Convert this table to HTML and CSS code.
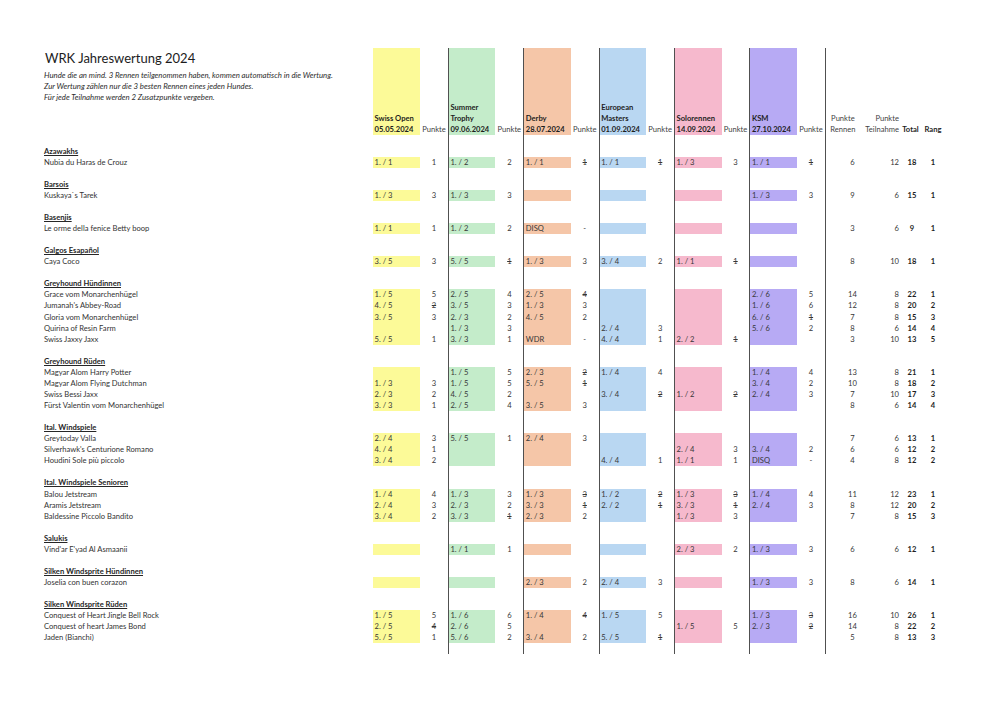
FILE: index.html
```html
<!DOCTYPE html>
<html lang="de">
<head>
<meta charset="utf-8">
<title>WRK Jahreswertung 2024</title>
<link rel="stylesheet" href="styles.css">
</head>
<body>
<div class="sheet">
<table class="wr">
<colgroup>
<col class="name">
<col class="res"><col class="pkt">
<col class="res sep"><col class="pkt">
<col class="res sep"><col class="pkt">
<col class="res sep"><col class="pkt">
<col class="res sep"><col class="pkt">
<col class="res sep"><col class="pkt">
<col class="pr sep"><col class="pt"><col class="tot"><col class="rang">
</colgroup>
<thead>
<tr class="head">
<td class="intro">
<h1 class="title">WRK Jahreswertung 2024</h1>
<p class="note">Hunde die an mind. 3 Rennen teilgenommen haben, kommen automatisch in die Wertung.<br>Zur Wertung zählen nur die 3 besten Rennen eines jeden Hundes.<br>Für jede Teilnahme werden 2 Zusatzpunkte vergeben.</p>
</td>
<td class="race y">Swiss Open<br>05.05.2024</td><td class="ph">Punkte</td>
<td class="race gr">Summer<br>Trophy<br>09.06.2024</td><td class="ph">Punkte</td>
<td class="race o">Derby<br>28.07.2024</td><td class="ph">Punkte</td>
<td class="race b">European<br>Masters<br>01.09.2024</td><td class="ph">Punkte</td>
<td class="race k">Solorennen<br>14.09.2024</td><td class="ph">Punkte</td>
<td class="race v">KSM<br>27.10.2024</td><td class="ph">Punkte</td>
<td class="hpr">Punkte<br>Rennen</td>
<td class="hpt">Punkte<br>Teilnahme</td>
<td class="htot">Total</td>
<td class="hrg">Rang</td>
</tr>
</thead>
<tbody>
<tr class="blank"><td></td><td colspan="2"></td><td colspan="2"></td><td colspan="2"></td><td colspan="2"></td><td colspan="2"></td><td colspan="2"></td><td colspan="4"></td></tr>

<tr><td class="grp"><span>Azawakhs</span></td><td colspan="2"></td><td colspan="2"></td><td colspan="2"></td><td colspan="2"></td><td colspan="2"></td><td colspan="2"></td><td colspan="4"></td></tr>
<tr><td class="nm">Nubia du Haras de Crouz</td>
<td class="c y">1. / 1</td><td class="p">1</td>
<td class="c gr">1. / 2</td><td class="p">2</td>
<td class="c o">1. / 1</td><td class="p"><s>1</s></td>
<td class="c b">1. / 1</td><td class="p"><s>1</s></td>
<td class="c k">1. / 3</td><td class="p">3</td>
<td class="c v">1. / 1</td><td class="p"><s>1</s></td>
<td class="pr">6</td><td class="pt">12</td><td class="tot">18</td><td class="rg">1</td></tr>
<tr class="blank"><td></td><td colspan="2"></td><td colspan="2"></td><td colspan="2"></td><td colspan="2"></td><td colspan="2"></td><td colspan="2"></td><td colspan="4"></td></tr>

<tr><td class="grp"><span>Barsois</span></td><td colspan="2"></td><td colspan="2"></td><td colspan="2"></td><td colspan="2"></td><td colspan="2"></td><td colspan="2"></td><td colspan="4"></td></tr>
<tr><td class="nm">Kuskaya`s Tarek</td>
<td class="c y">1. / 3</td><td class="p">3</td>
<td class="c gr">1. / 3</td><td class="p">3</td>
<td class="c o"></td><td class="p"></td>
<td class="c b"></td><td class="p"></td>
<td class="c k"></td><td class="p"></td>
<td class="c v">1. / 3</td><td class="p">3</td>
<td class="pr">9</td><td class="pt">6</td><td class="tot">15</td><td class="rg">1</td></tr>
<tr class="blank"><td></td><td colspan="2"></td><td colspan="2"></td><td colspan="2"></td><td colspan="2"></td><td colspan="2"></td><td colspan="2"></td><td colspan="4"></td></tr>

<tr><td class="grp"><span>Basenjis</span></td><td colspan="2"></td><td colspan="2"></td><td colspan="2"></td><td colspan="2"></td><td colspan="2"></td><td colspan="2"></td><td colspan="4"></td></tr>
<tr><td class="nm">Le orme della fenice Betty boop</td>
<td class="c y">1. / 1</td><td class="p">1</td>
<td class="c gr">1. / 2</td><td class="p">2</td>
<td class="c o">DISQ</td><td class="p">-</td>
<td class="c b"></td><td class="p"></td>
<td class="c k"></td><td class="p"></td>
<td class="c v"></td><td class="p"></td>
<td class="pr">3</td><td class="pt">6</td><td class="tot">9</td><td class="rg">1</td></tr>
<tr class="blank"><td></td><td colspan="2"></td><td colspan="2"></td><td colspan="2"></td><td colspan="2"></td><td colspan="2"></td><td colspan="2"></td><td colspan="4"></td></tr>

<tr><td class="grp"><span>Galgos Esapañol</span></td><td colspan="2"></td><td colspan="2"></td><td colspan="2"></td><td colspan="2"></td><td colspan="2"></td><td colspan="2"></td><td colspan="4"></td></tr>
<tr><td class="nm">Caya Coco</td>
<td class="c y">3. / 5</td><td class="p">3</td>
<td class="c gr">5. / 5</td><td class="p"><s>1</s></td>
<td class="c o">1. / 3</td><td class="p">3</td>
<td class="c b">3. / 4</td><td class="p">2</td>
<td class="c k">1. / 1</td><td class="p"><s>1</s></td>
<td class="c v"></td><td class="p"></td>
<td class="pr">8</td><td class="pt">10</td><td class="tot">18</td><td class="rg">1</td></tr>
<tr class="blank"><td></td><td colspan="2"></td><td colspan="2"></td><td colspan="2"></td><td colspan="2"></td><td colspan="2"></td><td colspan="2"></td><td colspan="4"></td></tr>

<tr><td class="grp"><span>Greyhound Hündinnen</span></td><td colspan="2"></td><td colspan="2"></td><td colspan="2"></td><td colspan="2"></td><td colspan="2"></td><td colspan="2"></td><td colspan="4"></td></tr>
<tr><td class="nm">Grace vom Monarchenhügel</td>
<td class="c y">1. / 5</td><td class="p">5</td>
<td class="c gr">2. / 5</td><td class="p">4</td>
<td class="c o">2. / 5</td><td class="p"><s>4</s></td>
<td class="c b"></td><td class="p"></td>
<td class="c k"></td><td class="p"></td>
<td class="c v">2. / 6</td><td class="p">5</td>
<td class="pr">14</td><td class="pt">8</td><td class="tot">22</td><td class="rg">1</td></tr>
<tr><td class="nm">Jumanah's Abbey-Road</td>
<td class="c y">4. / 5</td><td class="p"><s>2</s></td>
<td class="c gr">3. / 5</td><td class="p">3</td>
<td class="c o">1. / 3</td><td class="p">3</td>
<td class="c b"></td><td class="p"></td>
<td class="c k"></td><td class="p"></td>
<td class="c v">1. / 6</td><td class="p">6</td>
<td class="pr">12</td><td class="pt">8</td><td class="tot">20</td><td class="rg">2</td></tr>
<tr><td class="nm">Gloria vom Monarchenhügel</td>
<td class="c y">3. / 5</td><td class="p">3</td>
<td class="c gr">2. / 3</td><td class="p">2</td>
<td class="c o">4. / 5</td><td class="p">2</td>
<td class="c b"></td><td class="p"></td>
<td class="c k"></td><td class="p"></td>
<td class="c v">6. / 6</td><td class="p"><s>1</s></td>
<td class="pr">7</td><td class="pt">8</td><td class="tot">15</td><td class="rg">3</td></tr>
<tr><td class="nm">Quirina of Resin Farm</td>
<td class="c y"></td><td class="p"></td>
<td class="c gr">1. / 3</td><td class="p">3</td>
<td class="c o"></td><td class="p"></td>
<td class="c b">2. / 4</td><td class="p">3</td>
<td class="c k"></td><td class="p"></td>
<td class="c v">5. / 6</td><td class="p">2</td>
<td class="pr">8</td><td class="pt">6</td><td class="tot">14</td><td class="rg">4</td></tr>
<tr><td class="nm">Swiss Jaxxy Jaxx</td>
<td class="c y">5. / 5</td><td class="p">1</td>
<td class="c gr">3. / 3</td><td class="p">1</td>
<td class="c o">WDR</td><td class="p">-</td>
<td class="c b">4. / 4</td><td class="p">1</td>
<td class="c k">2. / 2</td><td class="p"><s>1</s></td>
<td class="c v"></td><td class="p"></td>
<td class="pr">3</td><td class="pt">10</td><td class="tot">13</td><td class="rg">5</td></tr>
<tr class="blank"><td></td><td colspan="2"></td><td colspan="2"></td><td colspan="2"></td><td colspan="2"></td><td colspan="2"></td><td colspan="2"></td><td colspan="4"></td></tr>

<tr><td class="grp"><span>Greyhound Rüden</span></td><td colspan="2"></td><td colspan="2"></td><td colspan="2"></td><td colspan="2"></td><td colspan="2"></td><td colspan="2"></td><td colspan="4"></td></tr>
<tr><td class="nm">Magyar Alom Harry Potter</td>
<td class="c y"></td><td class="p"></td>
<td class="c gr">1. / 5</td><td class="p">5</td>
<td class="c o">2. / 3</td><td class="p"><s>2</s></td>
<td class="c b">1. / 4</td><td class="p">4</td>
<td class="c k"></td><td class="p"></td>
<td class="c v">1. / 4</td><td class="p">4</td>
<td class="pr">13</td><td class="pt">8</td><td class="tot">21</td><td class="rg">1</td></tr>
<tr><td class="nm">Magyar Alom Flying Dutchman</td>
<td class="c y">1. / 3</td><td class="p">3</td>
<td class="c gr">1. / 5</td><td class="p">5</td>
<td class="c o">5. / 5</td><td class="p"><s>1</s></td>
<td class="c b"></td><td class="p"></td>
<td class="c k"></td><td class="p"></td>
<td class="c v">3. / 4</td><td class="p">2</td>
<td class="pr">10</td><td class="pt">8</td><td class="tot">18</td><td class="rg">2</td></tr>
<tr><td class="nm">Swiss Bessi Jaxx</td>
<td class="c y">2. / 3</td><td class="p">2</td>
<td class="c gr">4. / 5</td><td class="p">2</td>
<td class="c o"></td><td class="p"></td>
<td class="c b">3. / 4</td><td class="p"><s>2</s></td>
<td class="c k">1. / 2</td><td class="p"><s>2</s></td>
<td class="c v">2. / 4</td><td class="p">3</td>
<td class="pr">7</td><td class="pt">10</td><td class="tot">17</td><td class="rg">3</td></tr>
<tr><td class="nm">Fürst Valentin vom Monarchenhügel</td>
<td class="c y">3. / 3</td><td class="p">1</td>
<td class="c gr">2. / 5</td><td class="p">4</td>
<td class="c o">3. / 5</td><td class="p">3</td>
<td class="c b"></td><td class="p"></td>
<td class="c k"></td><td class="p"></td>
<td class="c v"></td><td class="p"></td>
<td class="pr">8</td><td class="pt">6</td><td class="tot">14</td><td class="rg">4</td></tr>
<tr class="blank"><td></td><td colspan="2"></td><td colspan="2"></td><td colspan="2"></td><td colspan="2"></td><td colspan="2"></td><td colspan="2"></td><td colspan="4"></td></tr>

<tr><td class="grp"><span>Ital. Windspiele</span></td><td colspan="2"></td><td colspan="2"></td><td colspan="2"></td><td colspan="2"></td><td colspan="2"></td><td colspan="2"></td><td colspan="4"></td></tr>
<tr><td class="nm">Greytoday Valla</td>
<td class="c y">2. / 4</td><td class="p">3</td>
<td class="c gr">5. / 5</td><td class="p">1</td>
<td class="c o">2. / 4</td><td class="p">3</td>
<td class="c b"></td><td class="p"></td>
<td class="c k"></td><td class="p"></td>
<td class="c v"></td><td class="p"></td>
<td class="pr">7</td><td class="pt">6</td><td class="tot">13</td><td class="rg">1</td></tr>
<tr><td class="nm">Silverhawk's Centurione Romano</td>
<td class="c y">4. / 4</td><td class="p">1</td>
<td class="c gr"></td><td class="p"></td>
<td class="c o"></td><td class="p"></td>
<td class="c b"></td><td class="p"></td>
<td class="c k">2. / 4</td><td class="p">3</td>
<td class="c v">3. / 4</td><td class="p">2</td>
<td class="pr">6</td><td class="pt">6</td><td class="tot">12</td><td class="rg">2</td></tr>
<tr><td class="nm">Houdini Sole più piccolo</td>
<td class="c y">3. / 4</td><td class="p">2</td>
<td class="c gr"></td><td class="p"></td>
<td class="c o"></td><td class="p"></td>
<td class="c b">4. / 4</td><td class="p">1</td>
<td class="c k">1. / 1</td><td class="p">1</td>
<td class="c v">DISQ</td><td class="p">-</td>
<td class="pr">4</td><td class="pt">8</td><td class="tot">12</td><td class="rg">2</td></tr>
<tr class="blank"><td></td><td colspan="2"></td><td colspan="2"></td><td colspan="2"></td><td colspan="2"></td><td colspan="2"></td><td colspan="2"></td><td colspan="4"></td></tr>

<tr><td class="grp"><span>Ital. Windspiele Senioren</span></td><td colspan="2"></td><td colspan="2"></td><td colspan="2"></td><td colspan="2"></td><td colspan="2"></td><td colspan="2"></td><td colspan="4"></td></tr>
<tr><td class="nm">Balou Jetstream</td>
<td class="c y">1. / 4</td><td class="p">4</td>
<td class="c gr">1. / 3</td><td class="p">3</td>
<td class="c o">1. / 3</td><td class="p"><s>3</s></td>
<td class="c b">1. / 2</td><td class="p"><s>2</s></td>
<td class="c k">1. / 3</td><td class="p"><s>3</s></td>
<td class="c v">1. / 4</td><td class="p">4</td>
<td class="pr">11</td><td class="pt">12</td><td class="tot">23</td><td class="rg">1</td></tr>
<tr><td class="nm">Aramis Jetstream</td>
<td class="c y">2. / 4</td><td class="p">3</td>
<td class="c gr">2. / 3</td><td class="p">2</td>
<td class="c o">3. / 3</td><td class="p"><s>1</s></td>
<td class="c b">2. / 2</td><td class="p"><s>1</s></td>
<td class="c k">3. / 3</td><td class="p"><s>1</s></td>
<td class="c v">2. / 4</td><td class="p">3</td>
<td class="pr">8</td><td class="pt">12</td><td class="tot">20</td><td class="rg">2</td></tr>
<tr><td class="nm">Baldessine Piccolo Bandito</td>
<td class="c y">3. / 4</td><td class="p">2</td>
<td class="c gr">3. / 3</td><td class="p"><s>1</s></td>
<td class="c o">2. / 3</td><td class="p">2</td>
<td class="c b"></td><td class="p"></td>
<td class="c k">1. / 3</td><td class="p">3</td>
<td class="c v"></td><td class="p"></td>
<td class="pr">7</td><td class="pt">8</td><td class="tot">15</td><td class="rg">3</td></tr>
<tr class="blank"><td></td><td colspan="2"></td><td colspan="2"></td><td colspan="2"></td><td colspan="2"></td><td colspan="2"></td><td colspan="2"></td><td colspan="4"></td></tr>

<tr><td class="grp"><span>Salukis</span></td><td colspan="2"></td><td colspan="2"></td><td colspan="2"></td><td colspan="2"></td><td colspan="2"></td><td colspan="2"></td><td colspan="4"></td></tr>
<tr><td class="nm">Vind'ar E'yad Al Asmaanii</td>
<td class="c y"></td><td class="p"></td>
<td class="c gr">1. / 1</td><td class="p">1</td>
<td class="c o"></td><td class="p"></td>
<td class="c b"></td><td class="p"></td>
<td class="c k">2. / 3</td><td class="p">2</td>
<td class="c v">1. / 3</td><td class="p">3</td>
<td class="pr">6</td><td class="pt">6</td><td class="tot">12</td><td class="rg">1</td></tr>
<tr class="blank"><td></td><td colspan="2"></td><td colspan="2"></td><td colspan="2"></td><td colspan="2"></td><td colspan="2"></td><td colspan="2"></td><td colspan="4"></td></tr>

<tr><td class="grp"><span>Silken Windsprite Hündinnen</span></td><td colspan="2"></td><td colspan="2"></td><td colspan="2"></td><td colspan="2"></td><td colspan="2"></td><td colspan="2"></td><td colspan="4"></td></tr>
<tr><td class="nm">Joselia con buen corazon</td>
<td class="c y"></td><td class="p"></td>
<td class="c gr"></td><td class="p"></td>
<td class="c o">2. / 3</td><td class="p">2</td>
<td class="c b">2. / 4</td><td class="p">3</td>
<td class="c k"></td><td class="p"></td>
<td class="c v">1. / 3</td><td class="p">3</td>
<td class="pr">8</td><td class="pt">6</td><td class="tot">14</td><td class="rg">1</td></tr>
<tr class="blank"><td></td><td colspan="2"></td><td colspan="2"></td><td colspan="2"></td><td colspan="2"></td><td colspan="2"></td><td colspan="2"></td><td colspan="4"></td></tr>

<tr><td class="grp"><span>Silken Windsprite Rüden</span></td><td colspan="2"></td><td colspan="2"></td><td colspan="2"></td><td colspan="2"></td><td colspan="2"></td><td colspan="2"></td><td colspan="4"></td></tr>
<tr><td class="nm">Conquest of Heart Jingle Bell Rock</td>
<td class="c y">1. / 5</td><td class="p">5</td>
<td class="c gr">1. / 6</td><td class="p">6</td>
<td class="c o">1. / 4</td><td class="p"><s>4</s></td>
<td class="c b">1. / 5</td><td class="p">5</td>
<td class="c k"></td><td class="p"></td>
<td class="c v">1. / 3</td><td class="p"><s>3</s></td>
<td class="pr">16</td><td class="pt">10</td><td class="tot">26</td><td class="rg">1</td></tr>
<tr><td class="nm">Conquest of heart James Bond</td>
<td class="c y">2. / 5</td><td class="p"><s>4</s></td>
<td class="c gr">2. / 6</td><td class="p">5</td>
<td class="c o"></td><td class="p"></td>
<td class="c b"></td><td class="p"></td>
<td class="c k">1. / 5</td><td class="p">5</td>
<td class="c v">2. / 3</td><td class="p"><s>2</s></td>
<td class="pr">14</td><td class="pt">8</td><td class="tot">22</td><td class="rg">2</td></tr>
<tr><td class="nm">Jaden (Bianchi)</td>
<td class="c y">5. / 5</td><td class="p">1</td>
<td class="c gr">5. / 6</td><td class="p">2</td>
<td class="c o">3. / 4</td><td class="p">2</td>
<td class="c b">5. / 5</td><td class="p"><s>1</s></td>
<td class="c k"></td><td class="p"></td>
<td class="c v"></td><td class="p"></td>
<td class="pr">5</td><td class="pt">8</td><td class="tot">13</td><td class="rg">3</td></tr>
<tr class="blank"><td></td><td colspan="2"></td><td colspan="2"></td><td colspan="2"></td><td colspan="2"></td><td colspan="2"></td><td colspan="2"></td><td colspan="4"></td></tr>
</tbody>
</table>
</div>
</body>
</html>
```
FILE: styles.css
```css
* { box-sizing: border-box; }
html, body { margin: 0; padding: 0; background: #ffffff; }
body {
  font-family: Lato, "Open Sans", "Liberation Sans", sans-serif;
  color: #333333;
}
.sheet { padding: 48px 0 0 44px; }

table.wr {
  border-collapse: collapse;
  table-layout: fixed;
  width: 900px;
  font-size: 7.6px;
}
col.name { width: 329px; }
col.res { width: 47px; }
col.pkt { width: 28.4px; }
col.pr { width: 38.6px; }
col.pt { width: 35px; }
col.tot { width: 23px; }
col.rang { width: 22px; }
col.sep { border-left: 1.5px solid #505050; }

td {
  padding: 0;
  height: 11.07px;
  line-height: 11px;
  white-space: nowrap;
  vertical-align: middle;
}

/* header */
tr.head td { height: 86.5px; vertical-align: bottom; }
tr.head td.intro { vertical-align: top; padding-top: 2px; padding-left: 1px; }
.title {
  margin: 0;
  font-size: 13px;
  line-height: 16px;
  font-weight: 400;
  color: #1c1c1c;
}
.note {
  margin: 4px 0 0 -1px;
  font-style: italic;
  font-size: 7.8px;
  line-height: 11px;
  color: #2e2e2e;
}
.race { font-weight: 700; color: #1e1e1e; padding-left: 1.5px; }
.ph { text-align: center; color: #444444; }
.hpr { text-align: center; color: #444444; padding-right: 4px; }
.hpt { text-align: right; color: #444444; }
.htot, .hrg { text-align: center; font-weight: 700; color: #1e1e1e; }

/* rows */
.grp span { font-weight: 700; text-decoration: underline; color: #262626; }
.nm { color: #333333; }
.c { padding-left: 1.5px; color: #363636; }
.p { text-align: center; color: #363636; }
.pr { text-align: center; padding-left: 15px; color: #363636; }
.pt { text-align: right; color: #363636; }
.tot { text-align: center; font-weight: 700; padding-left: 3px; color: #1e1e1e; }
.rg { text-align: center; font-weight: 700; color: #1e1e1e; }

/* race colours */
.y { background: #fcfa98; }
.gr { background: #c4ecca; }
.o { background: #f5c6a8; }
.b { background: #b9d7f2; }
.k { background: #f6b9cd; }
.v { background: #b7aaf4; }
```
